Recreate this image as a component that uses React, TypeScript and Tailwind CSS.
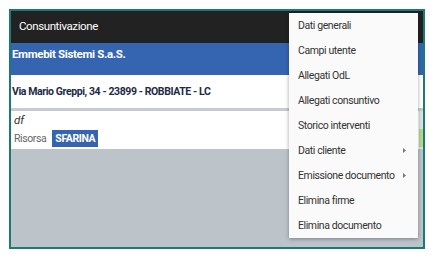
import React from "react";

const items: { label: string; sub?: boolean }[] = [
  { label: "Dati generali" },
  { label: "Campi utente" },
  { label: "Allegati OdL" },
  { label: "Allegati consuntivo" },
  { label: "Storico interventi" },
  { label: "Dati cliente", sub: true },
  { label: "Emissione documento", sub: true },
  { label: "Elimina firme" },
  { label: "Elimina documento" },
];

export default function App() {
  return (
    <div
      className="relative w-[435px] h-[258px] bg-white pt-[9px] pl-[9px] pr-[10px] pb-[9px]"
      style={{ fontFamily: "Roboto, 'Liberation Sans', sans-serif" }}
    >
      <div className="h-[240px] border-2 border-[#1b7a72] flex flex-col bg-[#bcc4ca]">
        <div className="h-[32px] bg-[#222222] flex items-center pl-[8px] text-white text-[11.5px] tracking-[-0.4px]">
          Consuntivazione
        </div>
        <div className="h-[32px] bg-[#3565b0] pl-[1px] pt-[3px] text-white font-bold text-[11.5px] tracking-[-0.35px] leading-[16px]">
          Emmebit Sistemi S.a.S.
        </div>
        <div className="h-[33px] bg-white pl-[1px] flex items-center text-[10.5px] tracking-[-0.4px] font-bold text-[#1d2a47]">
          Via Mario Greppi, 34 - 23899 - ROBBIATE - LC
        </div>
        <div className="h-[3px] bg-[#c5cbd0]" />
        <div className="h-[38px] bg-white flex">
          <div className="flex-1 pl-[3px] flex flex-col">
            <div className="italic text-[11.5px] text-[#333] leading-[14px] pt-[2px]">df</div>
            <div className="flex items-center mt-[3px]">
              <span className="text-[10.5px] tracking-[-0.4px] text-[#666]">Risorsa</span>
              <span className="ml-[6px] bg-[#3565b0] text-white font-bold text-[10.5px] tracking-[-0.4px] h-[17px] px-[3px] flex items-center">
                SFARINA
              </span>
            </div>
          </div>
          <div className="w-[4px] bg-[#dde1e4] flex flex-col">
            <div className="h-[18px]" />
            <div className="h-[18px] bg-[#b6d98c]" />
          </div>
        </div>
        <div className="flex-1" />
      </div>

      <div className="absolute left-[289px] top-[13px] w-[129px] bg-[#fafafa] shadow-[0_1px_4px_rgba(0,0,0,0.35)]">
        {items.map((it) => (
          <div
            key={it.label}
            className="h-[25px] flex items-center pl-[9px] pr-[12px] text-[10.5px] tracking-[-0.4px] text-[#333] whitespace-nowrap"
          >
            <span className="flex-1">{it.label}</span>
            {it.sub && (
              <svg width="3" height="5" viewBox="0 0 3 5">
                <path d="M0 0 L3 2.5 L0 5 Z" fill="#777" />
              </svg>
            )}
          </div>
        ))}
      </div>
    </div>
  );
}
